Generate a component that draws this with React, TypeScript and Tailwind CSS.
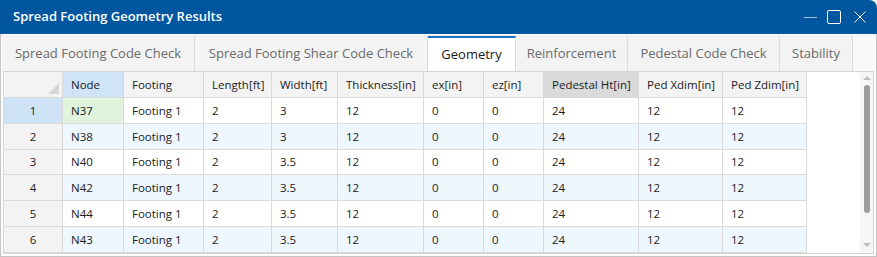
const font = { fontFamily: '"Segoe UI", "Open Sans", "Noto Sans", sans-serif' };

const columns = [
  { key: 'node', label: 'Node', w: 'w-[61px]' },
  { key: 'footing', label: 'Footing', w: 'w-[80px]' },
  { key: 'length', label: 'Length[ft]', w: 'w-[68px]' },
  { key: 'width', label: 'Width[ft]', w: 'w-[66px]' },
  { key: 'thick', label: 'Thickness[in]', w: 'w-[86px]' },
  { key: 'ex', label: 'ex[in]', w: 'w-[60px]' },
  { key: 'ez', label: 'ez[in]', w: 'w-[60px]' },
  { key: 'ped', label: 'Pedestal Ht[in]', w: 'w-[95px]' },
  { key: 'px', label: 'Ped Xdim[in]', w: 'w-[84px]' },
  { key: 'pz', label: 'Ped Zdim[in]', w: 'w-[84px]' },
];

const rows = [
  ['N37', 'Footing 1', '2', '3', '12', '0', '0', '24', '12', '12'],
  ['N38', 'Footing 1', '2', '3', '12', '0', '0', '24', '12', '12'],
  ['N40', 'Footing 1', '2', '3.5', '12', '0', '0', '24', '12', '12'],
  ['N42', 'Footing 1', '2', '3.5', '12', '0', '0', '24', '12', '12'],
  ['N44', 'Footing 1', '2', '3.5', '12', '0', '0', '24', '12', '12'],
  ['N43', 'Footing 1', '2', '3.5', '12', '0', '0', '24', '12', '12'],
];

const tabs = [
  { label: 'Spread Footing Code Check', w: 'w-[193px]' },
  { label: 'Spread Footing Shear Code Check', w: 'w-[233px]' },
  { label: 'Geometry', w: 'w-[88px]', active: true },
  { label: 'Reinforcement', w: 'w-[112px]' },
  { label: 'Pedestal Code Check', w: 'w-[152px]' },
  { label: 'Stability', w: 'w-[73px]' },
];

export default function App() {
  return (
    <div
      className="w-[877px] h-[257px] overflow-hidden bg-white rounded-tr-[8px] flex flex-col text-[#1b1b1b]"
      style={font}
    >
      {/* title bar */}
      <div className="h-[34px] bg-[#01579f] flex items-center justify-between pl-[13px] pr-[11px] text-white shrink-0">
        <span className="text-[13px] font-semibold">Spread Footing Geometry Results</span>
        <div className="flex items-center">
          <svg width="13" height="14" viewBox="0 0 13 14" className="mr-[10px]">
            <line x1="0" y1="7.5" x2="13" y2="7.5" stroke="#9fbfdc" strokeWidth="1" />
          </svg>
          <svg width="14" height="14" viewBox="0 0 14 14" className="mr-[13px]">
            <rect x="0.5" y="0.5" width="13" height="13" rx="1.5" fill="none" stroke="white" strokeWidth="1" />
          </svg>
          <svg width="12" height="12" viewBox="0 0 12 12">
            <path d="M0.5 0.5 L11.5 11.5 M11.5 0.5 L0.5 11.5" stroke="white" strokeWidth="1" />
          </svg>
        </div>
      </div>

      <div className="flex-1 flex flex-col border-x border-b border-[#c4c4c4] pt-[1px]">
        {/* tabs */}
        <div className="h-[36px] flex pl-[1px] bg-[#fafafa] border-t border-[#f0f0f0] shrink-0">
          {tabs.map((t) =>
            t.active ? (
              <div
                key={t.label}
                className={`${t.w} bg-white border-t-2 border-[#1e6fc4] border-r border-r-[#dcdcdc] flex items-center justify-center text-[13px] text-[#1b1b1b]`}
              >
                {t.label}
              </div>
            ) : (
              <div
                key={t.label}
                className={`${t.w} bg-[#f3f3f3] border-r border-[#dcdcdc] flex items-center justify-center text-[13px] text-[#6a6a6a]`}
              >
                {t.label}
              </div>
            )
          )}
        </div>

        {/* grid */}
        <div className="ml-[2px] mr-[2px] h-[183px] border border-[#d4d4d4] flex text-[11.5px] overflow-hidden">
          <div className="flex flex-col">
            {/* header */}
            <div className="flex h-[26px] border-b border-[#dadada]">
              <div className="w-[59px] bg-[#f3f3f3] border-r border-[#dadada] relative">
                <div className="absolute right-[3px] bottom-[3px] w-0 h-0 border-l-[11px] border-l-transparent border-b-[11px] border-b-[#d6d6d6]" />
              </div>
              {columns.map((c) => (
                <div
                  key={c.key}
                  className={`${c.w} border-r border-[#dadada] flex items-center pl-[8px] ${
                    c.key === 'node' ? 'bg-[#cfe4f8]' : c.key === 'ped' ? 'bg-[#dadada]' : 'bg-[#f3f3f3]'
                  }`}
                >
                  {c.label}
                </div>
              ))}
            </div>
            {rows.map((r, i) => (
              <div key={i} className="flex h-[26px] border-b border-[#dadada]">
                <div
                  className={`w-[59px] border-r border-[#dadada] flex items-center justify-center ${
                    i === 0 ? 'bg-[#cfe3f7]' : 'bg-[#f3f3f3]'
                  }`}
                >
                  {i + 1}
                </div>
                {r.map((v, j) => (
                  <div
                    key={j}
                    className={`${columns[j].w} border-r border-[#dadada] flex items-center pl-[8px] ${
                      i === 0 && j === 0 ? 'bg-[#e0f3dd]' : i % 2 === 1 ? 'bg-[#eef6fe]' : 'bg-white'
                    }`}
                  >
                    {v}
                  </div>
                ))}
              </div>
            ))}
          </div>
          <div className="flex-1" />
          {/* scrollbar */}
          <div className="w-[13px] bg-[#f6f6f6] flex flex-col items-center pt-[4px] pb-[6px]">
            <div className="w-0 h-0 border-x-[4px] border-x-transparent border-b-[4px] border-b-[#bdbdbd]" />
            <div className="w-[6px] h-[128px] mt-[5px] rounded-full bg-[#9d9d9d]" />
            <div className="flex-1" />
            <div className="w-0 h-0 border-x-[4px] border-x-transparent border-t-[4px] border-t-[#bdbdbd]" />
          </div>
        </div>
      </div>
    </div>
  );
}
